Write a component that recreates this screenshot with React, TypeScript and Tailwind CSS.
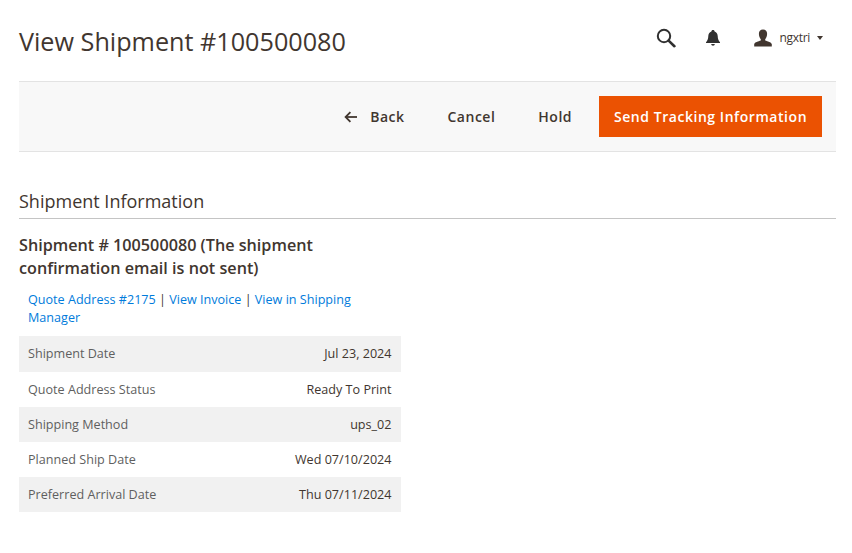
import React from 'react';

const ROWS = [
  { label: 'Shipment Date', value: 'Jul 23, 2024', height: 'h-9' },
  { label: 'Quote Address Status', value: 'Ready To Print', height: 'h-[35px] pt-[2px]' },
  { label: 'Shipping Method', value: 'ups_02', height: 'h-[35px] pt-[2px]' },
  { label: 'Planned Ship Date', value: 'Wed 07/10/2024', height: 'h-[35px] pt-[2px]' },
  { label: 'Preferred Arrival Date', value: 'Thu 07/11/2024', height: 'h-[35px] pt-[2px]' },
];

const SearchIcon = () => (
  <svg width="20" height="20" viewBox="0 0 20 20" fill="none" stroke="#303030">
    <circle cx="8" cy="8" r="6.2" strokeWidth="2" />
    <path d="M12.6 12.6 L18.4 18.2" strokeWidth="2.6" strokeLinecap="round" />
  </svg>
);

const BellIcon = () => (
  <svg width="16" height="18" viewBox="0 0 16 18" fill="#303030">
    <path d="M8 1C9 1 9.5 1.6 9.6 2.4C11.6 3 12.6 4.8 12.7 7C12.8 10 13.4 11.6 15 13.2V14H1V13.2C2.6 11.6 3.2 10 3.3 7C3.4 4.8 4.4 3 6.4 2.4C6.5 1.6 7 1 8 1Z" />
    <path d="M6.2 15H9.8C9.7 16 9 16.7 8 16.7C7 16.7 6.3 16 6.2 15Z" />
  </svg>
);

const UserIcon = () => (
  <svg width="20" height="18" viewBox="0 0 20 18" fill="#41362f">
    <path d="M10 0.5C12.8 0.5 14.2 2.4 14.1 5C14 7.4 13.2 9 12.2 10.2V11.4C14.6 12.4 18.2 13 18.8 15V17.5H1.2V15C1.8 13 5.4 12.4 7.8 11.4V10.2C6.8 9 6 7.4 5.9 5C5.8 2.4 7.2 0.5 10 0.5Z" />
  </svg>
);

const ArrowIcon = () => (
  <svg width="14" height="12" viewBox="0 0 14 12" fill="none" stroke="#41362f" strokeWidth="1.8">
    <path d="M13 6H2" />
    <path d="M6.4 1.2L1.6 6L6.4 10.8" />
  </svg>
);

export default function App() {
  return (
    <div className="min-h-[553px] bg-white pl-[19px] pr-4 text-[#41362f] font-['Open_Sans',sans-serif]">
      <header className="flex h-[81px] items-start justify-between">
        <h1 className="mt-[22px] text-[25.2px] leading-[38px] font-normal text-[#41362f]">View Shipment #100500080</h1>
        <div className="mt-[28px] mr-[13px] flex items-center">
          <SearchIcon />
          <div className="ml-[29px] mr-[32px]">
            <BellIcon />
          </div>
          <UserIcon />
          <span className="ml-[6px] text-xs tracking-[-0.3px] text-[#41362f]">ngxtri</span>
          <span className="ml-[7px] h-0 w-0 border-x-[3px] border-t-[4px] border-x-transparent border-t-[#41362f]" />
        </div>
      </header>

      <div className="flex h-[71px] items-center justify-end border-y border-[#e3e3e3] bg-[#f8f8f8] pr-[14px] text-sm font-semibold tracking-[0.5px]">
        <button className="flex items-center gap-[12px] font-semibold text-[#41362f]">
          <ArrowIcon />
          Back
        </button>
        <button className="ml-[43px] font-semibold text-[#41362f]">Cancel</button>
        <button className="ml-[43px] font-semibold text-[#41362f]">Hold</button>
        <button className="ml-[27px] h-[41px] w-[223px] bg-[#eb5202] font-semibold tracking-[0.55px] text-white">Send Tracking Information</button>
      </div>

      <h2 className="mt-[36px] border-b border-[#c4c4c4] pb-[4px] text-lg leading-[26px] font-normal text-[#41362f]">Shipment Information</h2>

      <div className="w-[382px]">
        <h3 className="mt-[15px] text-[16.2px] leading-[23px] font-semibold text-[#41362f]">
          Shipment # 100500080 (The shipment<br />confirmation email is not sent)
        </h3>
        <p className="mt-[11px] pl-[9px] pr-[10px] text-[12.6px] leading-[18px]">
          <a className="text-[#007bdb]">Quote Address #2175</a> | <a className="text-[#007bdb]">View Invoice</a> | <a className="text-[#007bdb]">View in Shipping Manager</a>
        </p>
        <div className="mt-[9px] text-[12.6px]">
          {ROWS.map((row, i) => (
            <div
              key={row.label}
              className={`flex items-center justify-between pl-[9px] pr-[9.5px] ${row.height} ${i % 2 === 0 ? 'bg-[#f1f1f1]' : 'bg-white'}`}
            >
              <span className="text-[#5f5f5f]">{row.label}</span>
              <span className="text-[#41362f]">{row.value}</span>
            </div>
          ))}
        </div>
      </div>
    </div>
  );
}
